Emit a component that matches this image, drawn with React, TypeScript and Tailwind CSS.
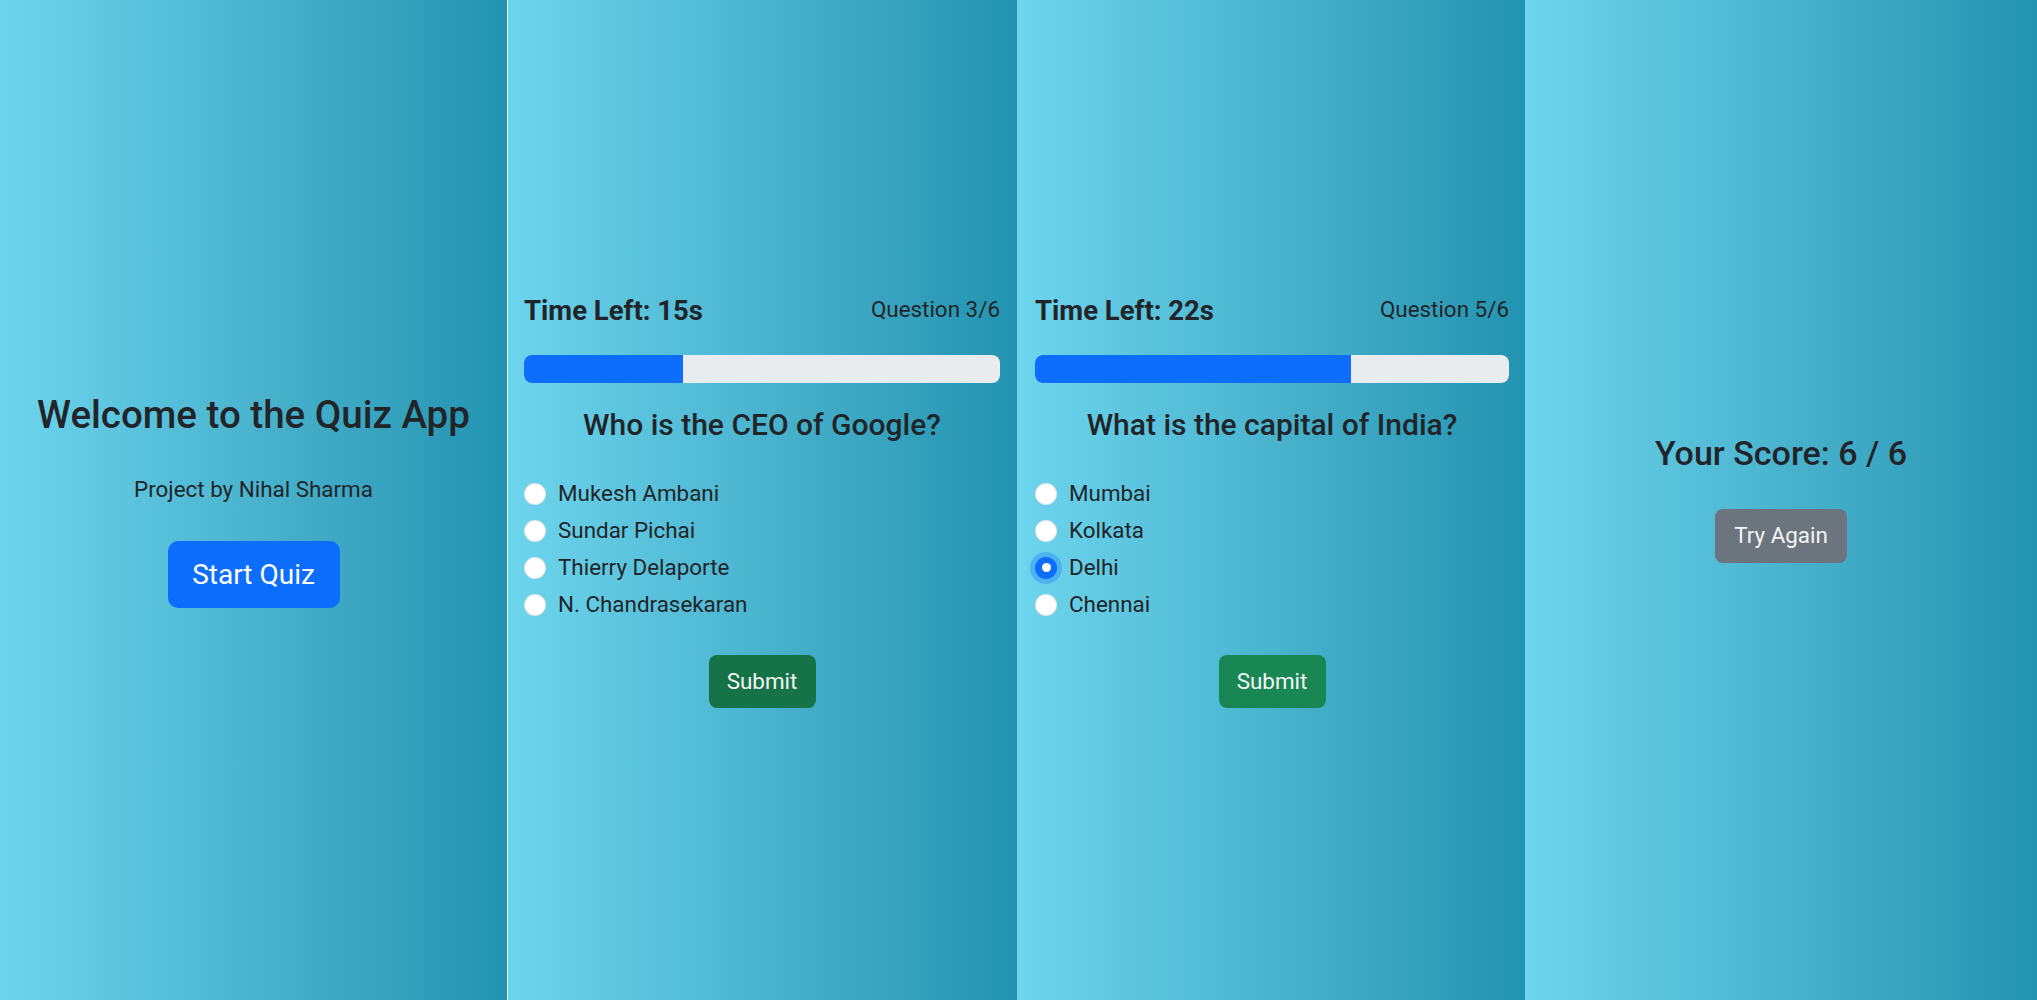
import React from "react";

type Question = {
  time: number;
  index: number;
  total: number;
  text: string;
  options: string[];
  selected?: number;
  submitClass: string;
};

const font = { fontFamily: "Roboto, 'Noto Sans', sans-serif" };

function Radio({ checked }: { checked?: boolean }) {
  if (checked) {
    return (
      <span className="flex h-[22px] w-[22px] shrink-0 items-center justify-center rounded-full bg-[#0d6efd] ring-[5px] ring-[#0d6efd]/30">
        <span className="h-[9px] w-[9px] rounded-full bg-white" />
      </span>
    );
  }
  return <span className="h-[22px] w-[22px] shrink-0 rounded-full border border-black/10 bg-white" />;
}

function QuizPanel({ q, pad }: { q: Question; pad: string }) {
  const pct = ((q.index - 1) / q.total) * 100;
  return (
    <div className={`flex h-full flex-col bg-gradient-to-r from-[#6dd5ed] to-[#2193b0] pt-[292px] ${pad}`}>
      {/* header */}
      <div className="flex items-start justify-between">
        <span className="mt-[2px] text-[27.5px] font-bold leading-[34px] text-[#212529]">Time Left: {q.time}s</span>
        <span className="text-[22.4px] leading-[34px] text-[#212529]">
          Question {q.index}/{q.total}
        </span>
      </div>

      {/* progress */}
      <div className="mt-[27px] h-[28px] w-full overflow-hidden rounded-[8px] bg-[#e9ecef]">
        <div className="h-full bg-[#0d6efd]" style={{ width: `${pct}%` }} />
      </div>

      <h3 className="mt-[24px] text-center text-[30px] font-medium leading-[36px] text-[#212529]">{q.text}</h3>

      <div className="mt-[32px] flex flex-col">
        {q.options.map((o, i) => (
          <label key={o} className="flex h-[37px] items-center gap-[12px] text-[22.4px] text-[#212529]">
            <Radio checked={q.selected === i} />
            {o}
          </label>
        ))}
      </div>

      <div className="mt-[32px] flex justify-center">
        <button className={`h-[53px] w-[107px] rounded-[8px] text-[22.4px] text-[#f3f6f4] ${q.submitClass}`}>Submit</button>
      </div>
    </div>
  );
}

export default function App() {
  const q1: Question = {
    time: 15,
    index: 3,
    total: 6,
    text: "Who is the CEO of Google?",
    options: ["Mukesh Ambani", "Sundar Pichai", "Thierry Delaporte", "N. Chandrasekaran"],
    submitClass: "bg-[#157347]",
  };
  const q2: Question = {
    time: 22,
    index: 5,
    total: 6,
    text: "What is the capital of India?",
    options: ["Mumbai", "Kolkata", "Delhi", "Chennai"],
    selected: 2,
    submitClass: "bg-[#198754]",
  };

  return (
    <div className="flex h-[1000px] w-[2037px] overflow-hidden" style={font}>
      {/* Welcome */}
      <div className="flex h-full w-[508px] shrink-0 flex-col items-center border-r border-white bg-gradient-to-r from-[#6dd5ed] to-[#2193b0] pt-[392px]">
        <h1 className="text-[38.5px] font-medium leading-[46px] text-[#212529]">Welcome to the Quiz App</h1>
        <p className="mt-[38px] text-[22.4px] leading-[27px] text-[#212529]">Project by Nihal Sharma</p>
        <button className="mt-[38px] h-[67px] w-[172px] rounded-[10px] bg-[#0d6efd] text-[28px] text-white">
          Start Quiz
        </button>
      </div>

      <div className="h-full w-[509px] shrink-0">
        <QuizPanel q={q1} pad="pl-[16px] pr-[17px]" />
      </div>
      <div className="h-full w-[508px] shrink-0">
        <QuizPanel q={q2} pad="pl-[18px] pr-[16px]" />
      </div>

      {/* Result */}
      <div className="flex h-full w-[512px] shrink-0 flex-col items-center bg-gradient-to-r from-[#6dd5ed] to-[#2193b0] pt-[433px]">
        <h2 className="text-[34px] font-medium leading-[40px] text-[#212529]">Your Score: 6 / 6</h2>
        <button className="mt-[36px] h-[54px] w-[132px] rounded-[8px] bg-[#6c757d] text-[22.4px] text-[#f3f4f5]">
          Try Again
        </button>
      </div>
    </div>
  );
}
